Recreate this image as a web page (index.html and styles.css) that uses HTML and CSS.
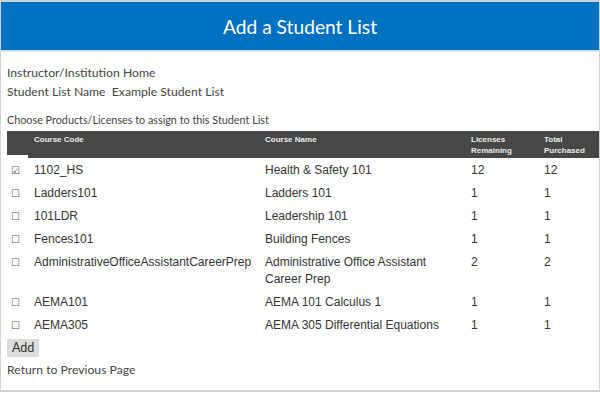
FILE: index.html
```html
<!DOCTYPE html>
<html>
<head>
<meta charset="utf-8">
<link rel="stylesheet" href="styles.css">
</head>
<body>
<div class="page">
  <header class="banner"><h1 class="title">Add a Student List</h1></header>
  <main class="content">
    <div class="line">Instructor/Institution Home</div>
    <div class="line">Student List Name&nbsp; Example Student List</div>
    <div class="choose">Choose Products/Licenses to assign to this Student List</div>
    <div class="table">
      <div class="row head">
        <div class="cell cb-head"></div>
        <div class="cell">Course Code</div>
        <div class="cell">Course Name</div>
        <div class="cell">Licenses<br>Remaining</div>
        <div class="cell">Total<br>Purchased</div>
      </div>
      <div class="row"><div class="cell cb">☑</div><div class="cell">1102_HS</div><div class="cell">Health &amp; Safety 101</div><div class="cell">12</div><div class="cell">12</div></div>
      <div class="row"><div class="cell cb">☐</div><div class="cell">Ladders101</div><div class="cell">Ladders 101</div><div class="cell">1</div><div class="cell">1</div></div>
      <div class="row"><div class="cell cb">☐</div><div class="cell">101LDR</div><div class="cell">Leadership 101</div><div class="cell">1</div><div class="cell">1</div></div>
      <div class="row"><div class="cell cb">☐</div><div class="cell">Fences101</div><div class="cell">Building Fences</div><div class="cell">1</div><div class="cell">1</div></div>
      <div class="row"><div class="cell cb">☐</div><div class="cell">AdministrativeOfficeAssistantCareerPrep</div><div class="cell">Administrative Office Assistant Career Prep</div><div class="cell">2</div><div class="cell">2</div></div>
      <div class="row"><div class="cell cb">☐</div><div class="cell">AEMA101</div><div class="cell">AEMA 101 Calculus 1</div><div class="cell">1</div><div class="cell">1</div></div>
      <div class="row"><div class="cell cb">☐</div><div class="cell">AEMA305</div><div class="cell">AEMA 305 Differential Equations</div><div class="cell">1</div><div class="cell">1</div></div>
    </div>
    <button class="add">Add</button>
    <div class="return">Return to Previous Page</div>
  </main>
</div>
</body>
</html>
```

FILE: styles.css
```css
html, body {
  margin: 0;
  padding: 0;
  background: #ffffff;
}
.page {
  width: 600px;
  height: 392px;
  box-sizing: border-box;
  border: 1px solid #d2d2d2;
  border-top-width: 2px;
  border-bottom-width: 2px;
  font-family: Lato, "Liberation Sans", sans-serif;
  color: #444;
}
.banner {
  height: 48px;
  background: #0070c0;
  border-bottom: 2px solid #cfe3f3;
  display: flex;
  align-items: center;
  justify-content: center;
}
.title {
  margin: 0;
  font-weight: 400;
  font-size: 19.2px;
  color: #ffffff;
}
.content {
  padding-left: 6px;
  padding-top: 11px;
}
.line {
  font-size: 12.2px;
  line-height: 19px;
}
.choose {
  font-size: 10.8px;
  line-height: 16px;
  margin-top: 11px;
}
.table {
  margin-top: 3px;
  font-family: "Liberation Sans", Arial, sans-serif;
}
.row {
  display: grid;
  grid-template-columns: 21px 231px 206px 73px 1fr;
  font-size: 12px;
  line-height: 17px;
  color: #333;
}
.row .cell {
  padding: 4px 6px 2px 6px;
}
.row .cell.cb {
  padding-left: 4px;
  padding-right: 0;
  font-family: "DejaVu Sans", sans-serif;
  font-size: 10px;
  color: #555;
}
.row.head {
  color: #ececec;
  font-size: 8px;
  font-weight: bold;
  line-height: 11px;
  height: 27px;
}
.row.head .cell {
  padding-top: 3px;
  background: #474747;
}
.row.head .cell.cb-head {
  height: 24px;
  box-sizing: border-box;
  align-self: start;
}
.add {
  margin-top: 3px;
  font-family: Lato, "Liberation Sans", sans-serif;
  font-size: 12.5px;
  color: #333;
  background: #dcdcdc;
  border: none;
  padding: 1px 5px;
  height: 18px;
  line-height: 16px;
  display: block;
}
.return {
  font-size: 12.2px;
  line-height: 19px;
  margin-top: 3px;
}
```
